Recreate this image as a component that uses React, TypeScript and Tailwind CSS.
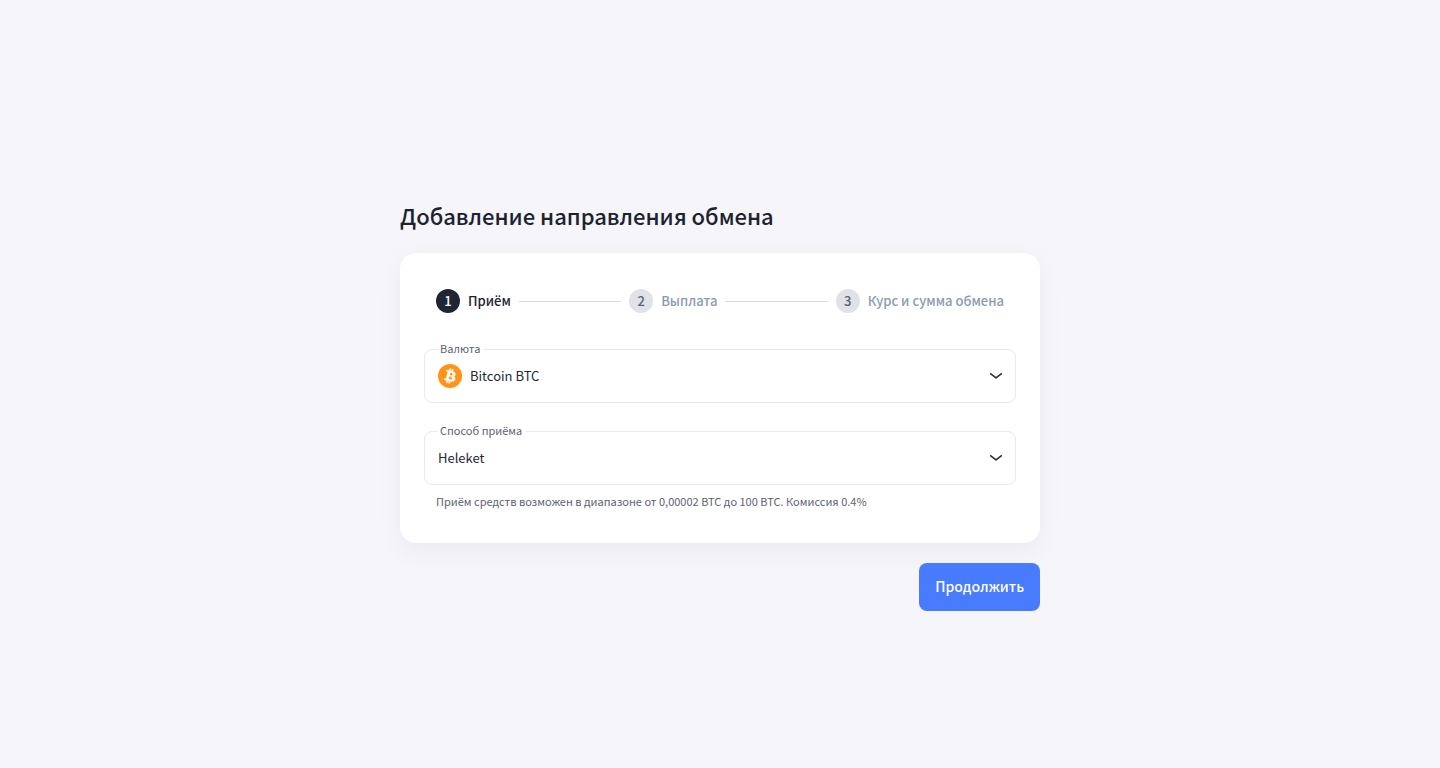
import React, { useState } from 'react';

interface Step {
  id: number;
  title: string;
}

const STEPS: Step[] = [
  { id: 1, title: 'Приём' },
  { id: 2, title: 'Выплата' },
  { id: 3, title: 'Курс и сумма обмена' },
];

const BitcoinIcon = () => (
  <svg viewBox="0 0 32 32" className="size-6 shrink-0" aria-hidden="true">
    <circle cx="16" cy="16" r="16" fill="#ff9416" />
    <path
      fill="#fff"
      stroke="#fff"
      strokeWidth="0.5"
      d="M23.189 14.02c.314-2.096-1.283-3.223-3.465-3.975l.708-2.84-1.728-.43-.69 2.765c-.454-.114-.92-.22-1.385-.326l.695-2.783L15.596 6l-.708 2.839c-.376-.086-.746-.17-1.104-.26l.002-.009-2.384-.595-.46 1.846s1.283.294 1.256.312c.7.175.826.638.805 1.006l-.806 3.235c.048.012.11.03.18.057l-.183-.045-1.13 4.532c-.086.212-.303.531-.793.41.018.025-1.256-.313-1.256-.313l-.858 1.978 2.25.561c.418.105.828.215 1.231.318l-.715 2.872 1.727.43.708-2.84c.472.127.93.245 1.378.357l-.706 2.828 1.728.43.715-2.866c2.948.558 5.164.333 6.097-2.333.752-2.146-.037-3.385-1.588-4.192 1.13-.26 1.98-1.003 2.207-2.538zm-3.95 5.538c-.533 2.147-4.148.986-5.32.695l.95-3.805c1.172.293 4.929.872 4.37 3.11zm.535-5.569c-.487 1.953-3.495.96-4.47.717l.86-3.45c.975.243 4.118.696 3.61 2.733z"
    />
  </svg>
);

const ChevronIcon = () => (
  <svg viewBox="0 0 12 6" className="h-[6px] w-3 shrink-0" fill="none" aria-hidden="true">
    <path d="M0.8 0.8 L6 4.9 L11.2 0.8" stroke="#2b303b" strokeWidth="1.6" strokeLinecap="round" strokeLinejoin="round" />
  </svg>
);

interface SelectFieldProps {
  id: string;
  label: string;
  value: string;
  options: string[];
  icon?: React.ReactNode;
  onChange: (value: string) => void;
}

const SelectField: React.FC<SelectFieldProps> = ({ id, label, value, options, icon, onChange }) => (
  <fieldset className="min-w-0 rounded-lg border border-[#e9e9f1] px-[13px]">
    <legend className="pr-1 pb-0.5 pl-0.5 text-[11px] leading-4 text-[#5d6270]">
      <label htmlFor={id}>{label}</label>
    </legend>
    <div className="flex h-11 items-center gap-2 pb-2">
      {icon}
      <select
        id={id}
        value={value}
        onChange={(e) => onChange(e.target.value)}
        className="h-9 min-w-0 flex-1 appearance-none bg-transparent text-[13px] text-[#232836] outline-none"
      >
        {options.map((option) => (
          <option key={option}>{option}</option>
        ))}
      </select>
      <ChevronIcon />
    </div>
  </fieldset>
);

const App: React.FC = () => {
  const [step, setStep] = useState(1);
  const [currency, setCurrency] = useState('Bitcoin BTC');
  const [method, setMethod] = useState('Heleket');

  return (
    <div className="flex min-h-screen flex-col items-center justify-center bg-[#f5f5fa] px-4 pt-[42px] font-['Noto_Sans_CJK_SC',sans-serif]">
      <main className="w-full max-w-[640px]">
        <h1 className="mb-[22px] text-[22px] leading-8 font-medium text-[#1c222f]">Добавление направления обмена</h1>

        <div className="rounded-2xl bg-white px-6 pt-9 pb-[34px] shadow-[0_8px_24px_rgba(60,70,110,0.06)]">
          {/* Steps */}
          <ol className="flex items-center gap-2 px-3">
            {STEPS.map((s, i) => (
              <React.Fragment key={s.id}>
                {i > 0 && <li aria-hidden="true" className="h-px flex-1 bg-[#d8dae5]"></li>}
                <li className="flex items-center gap-2">
                  <span
                    className={`flex size-6 items-center justify-center rounded-full text-[13px] leading-6 font-medium ${
                      s.id === step ? 'bg-[#1f2533] text-white' : 'bg-[#e0e1e9] text-[#5d6270]'
                    }`}
                  >
                    {s.id}
                  </span>
                  <span
                    className={`text-[13px] leading-6 font-medium ${s.id === step ? 'text-[#1c222f]' : 'text-[#8c9bb0]'}`}
                  >
                    {s.title}
                  </span>
                </li>
              </React.Fragment>
            ))}
          </ol>

          {/* Fields */}
          <div className="mt-[27px] flex flex-col gap-[19px]">
            <SelectField
              id="currency"
              label="Валюта"
              value={currency}
              options={['Bitcoin BTC']}
              icon={<BitcoinIcon />}
              onChange={setCurrency}
            />
            <SelectField
              id="method"
              label="Способ приёма"
              value={method}
              options={['Heleket']}
              onChange={setMethod}
            />
          </div>
          <p className="mt-2 px-3 text-[11px] leading-4 text-[#5d6270]">
            Приём средств возможен в диапазоне от 0,00002 BTC до 100 BTC. Комиссия 0.4%
          </p>
        </div>

        <div className="mt-5 flex justify-end">
          <button
            type="button"
            onClick={() => setStep(Math.min(step + 1, STEPS.length))}
            className="h-12 rounded-lg bg-[#487bfd] px-4 pb-0.5 text-sm font-medium text-white"
          >
            Продолжить
          </button>
        </div>
      </main>
    </div>
  );
};

export default App;
